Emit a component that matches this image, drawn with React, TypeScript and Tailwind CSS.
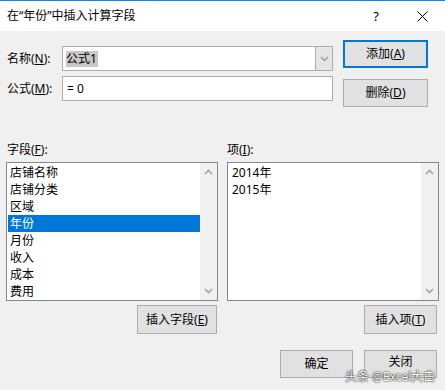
import React from "react";

const font = { fontFamily: '"Noto Sans", "Noto Sans CJK SC", sans-serif' };

function Btn({ children, className = "" }: { children: React.ReactNode; className?: string }) {
  return (
    <div
      className={
        "flex items-center justify-center bg-[#e1e1e1] border border-[#adadad] text-[12px] leading-[16px] text-black " +
        className
      }
    >
      {children}
    </div>
  );
}

function ChevUp() {
  return (
    <svg width="9" height="6" viewBox="0 0 9 6">
      <path d="M1 5 L4.5 1.5 L8 5" fill="none" stroke="#a3a3a3" strokeWidth="1.6" />
    </svg>
  );
}
function ChevDown() {
  return (
    <svg width="9" height="6" viewBox="0 0 9 6">
      <path d="M1 1 L4.5 4.5 L8 1" fill="none" stroke="#a3a3a3" strokeWidth="1.6" />
    </svg>
  );
}

function ListBox({ items, selected, textPad }: { items: string[]; selected?: number; textPad: string }) {
  return (
    <div className="w-[212px] h-[139px] border border-[#828790] bg-white flex">
      <div className="flex-1 flex flex-col pt-[1px] pl-[1px]">
        {items.map((it, i) => (
          <div
            key={it}
            className={
              "h-[17px] text-[12px] leading-[17px] " +
              textPad +
              (i === selected ? " bg-[#0078d7] text-white" : " text-black")
            }
          >
            {it}
          </div>
        ))}
      </div>
      <div className="w-[17px] bg-[#f0f0f0] flex flex-col items-center justify-between py-[6px]">
        <ChevUp />
        <ChevDown />
      </div>
    </div>
  );
}

export default function App() {
  return (
    <div className="w-[445px] h-[390px] bg-[#f0f0f0] relative overflow-hidden" style={font}>
      {/* Title bar */}
      <div className="h-[31px] bg-white border-t border-[#1883d7] flex items-center pl-[7px] pr-[17px]">
        <div className="text-[12px] leading-[16px] text-black flex-1">在“年份”中插入计算字段</div>
        <div className="text-[13px] leading-[16px] text-black mr-[38px]">?</div>
        <svg width="11" height="11" viewBox="0 0 11 11">
          <path d="M0.5 0.5 L10.5 10.5 M10.5 0.5 L0.5 10.5" stroke="#000" strokeWidth="1" />
        </svg>
      </div>

      {/* Top section */}
      <div className="flex pl-[7px] pt-[9px]">
        <div className="flex flex-col pt-[6px] gap-[5px]">
          <div className="flex items-center">
            <div className="w-[55px] text-[12px] leading-[16px] text-black">
              名称(<u>N</u>):
            </div>
            <div className="w-[271px] h-[25px] bg-white border border-[#adadad] flex">
              <div className="flex-1 flex items-center pl-[3px]">
                <span className="bg-[#c8c8c8] text-[12px] leading-[16px] text-black pr-[1px]">公式1</span>
              </div>
              <div className="w-[17px] bg-[#e5e5e5] border-l border-[#adadad] flex items-center justify-center">
                <ChevDown />
              </div>
            </div>
          </div>
          <div className="flex items-center">
            <div className="w-[55px] text-[12px] leading-[16px] text-black">
              公式(<u>M</u>):
            </div>
            <div className="w-[271px] h-[25px] bg-white border border-[#adadad] flex items-center pl-[4px] text-[12px] leading-[16px] text-black">
              = 0
            </div>
          </div>
        </div>
        <div className="flex flex-col ml-[10px] gap-[11px]">
          <Btn className="w-[85px] h-[28px] !border-2 !border-[#0078d7]">
            添加(<u>A</u>)
          </Btn>
          <Btn className="w-[85px] h-[28px]">
            删除(<u>D</u>)
          </Btn>
        </div>
      </div>

      {/* Lists */}
      <div className="flex pl-[6px] pt-[35px] gap-[9px]">
        <div className="flex flex-col">
          <div className="text-[12px] leading-[16px] text-black pl-[1px] h-[20px]">
            字段(<u>F</u>):
          </div>
          <ListBox
            items={["店铺名称", "店铺分类", "区域", "年份", "月份", "收入", "成本", "费用"]}
            selected={3}
            textPad="pl-[2px]"
          />
          <div className="flex justify-end pr-[1px] pt-[4px]">
            <Btn className="w-[80px] h-[29px]">
              插入字段(<u>E</u>)
            </Btn>
          </div>
        </div>
        <div className="flex flex-col">
          <div className="text-[12px] leading-[16px] text-black h-[20px]">
            项(<u>I</u>):
          </div>
          <ListBox items={["2014年", "2015年"]} textPad="pl-[3px]" />
          <div className="flex justify-end pr-[2px] pt-[4px]">
            <Btn className="w-[73px] h-[29px]">
              插入项(<u>T</u>)
            </Btn>
          </div>
        </div>
      </div>

      {/* Bottom buttons */}
      <div className="flex justify-end pr-[8px] pt-[16px] gap-[11px]">
        <Btn className="w-[73px] h-[28px]">确定</Btn>
        <Btn className="w-[73px] h-[28px] items-start pt-[3px]">关闭</Btn>
      </div>

      {/* Watermark */}
      <div className="absolute left-[345px] top-[369px] text-[12px] leading-[15px] text-white [text-shadow:0_0_2px_rgba(0,0,0,0.9),0_0_1px_rgba(0,0,0,0.9)] whitespace-nowrap">
        头条 @Excel大白
      </div>
    </div>
  );
}
